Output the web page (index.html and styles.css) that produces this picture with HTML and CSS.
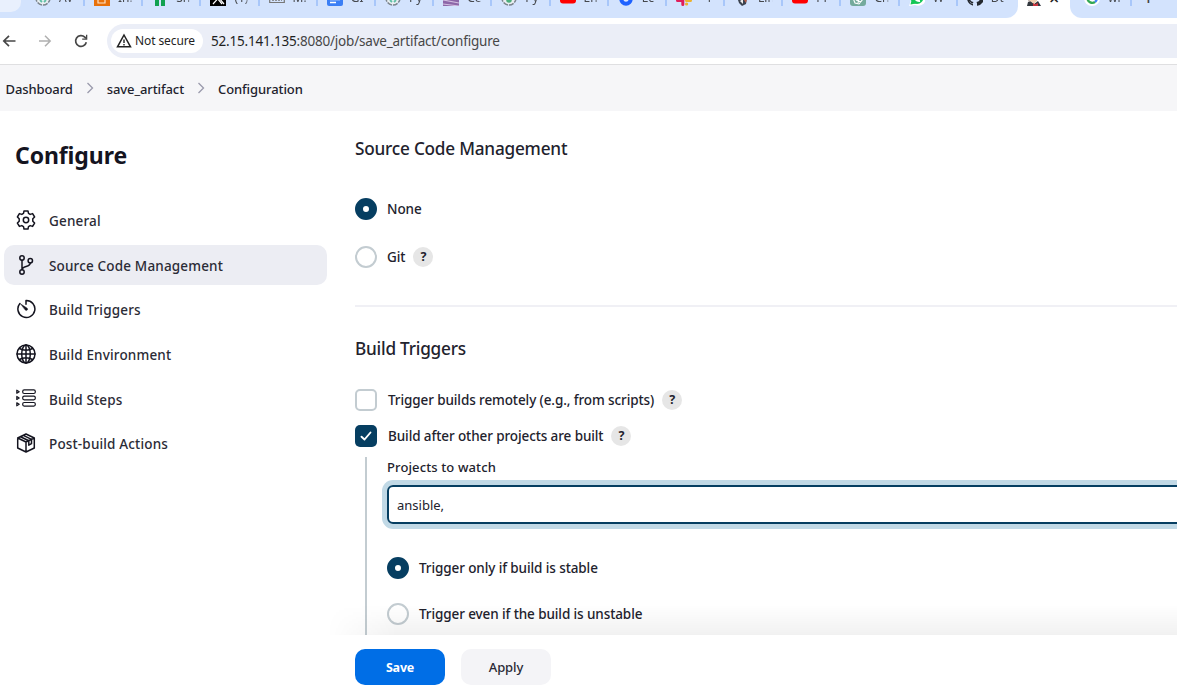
FILE: index.html
```html
<!DOCTYPE html>
<html lang="en">
<head>
<meta charset="utf-8">
<title>save_artifact Config [Jenkins]</title>
<link rel="stylesheet" href="styles.css">
</head>
<body>
<div class="tabstrip">
  <div class="tabs tabs-left">
    <div class="tab-search"></div>
    <div class="tab tab-first"><svg class="fav" viewBox="0 0 16 16"><circle cx="8" cy="8" r="7" fill="#e9eef2" stroke="#7b848c" stroke-width="1.5" stroke-dasharray="5 1"/><path d="M5 10l2 2M9 12l2-2" stroke="#5fbfa5" stroke-width="1.800"/></svg><span class="tt">AV</span></div>
    <div class="tab"><svg class="fav" viewBox="0 0 16 16"><path fill="#e8710a" d="M0 0h16v16H0z"/><path d="M4 7v6h7v-3M7 9h5" fill="none" stroke="#fde3c8" stroke-width="1.2"/></svg><span class="tt">In:</span></div>
    <div class="tab"><svg class="fav" viewBox="0 0 16 16"><path fill="#12a150" d="M3 2h4v14H3zM9 2h4v14H9z"/></svg><span class="tt">Sh</span></div>
    <div class="tab"><svg class="fav" viewBox="0 0 16 16"><path fill="#000" d="M0 0h16v16H0z"/><path d="M3 3l9 11M13 3L3 14M5 3l9 11" stroke="#fff" stroke-width="1.2"/></svg><span class="tt">(1)</span></div>
    <div class="tab"><svg class="fav" viewBox="0 0 16 16"><path d="M.7 3v9.5h14.600V3" fill="none" stroke="#777" stroke-width="1.2"/><path d="M3 10h10" stroke="#777" stroke-width="1.5" stroke-dasharray="2 1"/></svg><span class="tt">M:</span></div>
    <div class="tab"><svg class="fav" viewBox="0 0 16 16"><rect width="16" height="16" rx="2" fill="#3b7ff5"/><path d="M3 9.500h10M3 12.500h6" stroke="#fff" stroke-width="1.500"/></svg><span class="tt">GI</span></div>
    <div class="tab"><svg class="fav" viewBox="0 0 16 16"><circle cx="8" cy="8" r="7" fill="#e9eef2" stroke="#7b848c" stroke-width="1.500" stroke-dasharray="5 1"/><path d="M5 10l2 2M9 12l2-2" stroke="#5fbfa5" stroke-width="1.800"/></svg><span class="tt">Py</span></div>
    <div class="tab"><svg class="fav" viewBox="0 0 16 16"><path fill="#8d67a8" d="M0 0h16v16H0z"/><path d="M0 10l16 3M0 14l16 2" stroke="#d3bfe0" stroke-width="1.200"/></svg><span class="tt">Ce</span></div>
    <div class="tab"><svg class="fav" viewBox="0 0 16 16"><circle cx="8" cy="8" r="7" fill="#e9eef2" stroke="#7b848c" stroke-width="1.500" stroke-dasharray="5 1"/><circle cx="8" cy="10" r="2.800" fill="#4cae7c"/></svg><span class="tt">Py</span></div>
    <div class="tab"><svg class="fav" viewBox="0 0 16 16"><rect y="2" width="16" height="11.500" rx="3" fill="#f00"/></svg><span class="tt">En</span></div>
    <div class="tab"><svg class="fav" viewBox="0 0 16 16"><circle cx="8" cy="9" r="4.700" fill="#dbe7ff" stroke="#1f62ff" stroke-width="4"/></svg><span class="tt">Ec</span></div>
    <div class="tab"><svg class="fav" viewBox="0 0 16 16"><path d="M1.500 10.500h4M6.800 9v5.500" stroke="#e01e5a" stroke-width="3" stroke-linecap="round"/><path d="M10.500 10.500h4M10.500 14h.2" stroke="#ecb22e" stroke-width="3" stroke-linecap="round"/></svg><span class="tt">&nbsp;&nbsp;T</span></div>
    <div class="tab"><svg class="fav" viewBox="0 0 16 16"><path d="M3 7l2 6 3 3 4-2 1-7z" fill="#3b4350"/><path d="M6 11l3-2v5z" fill="#eee"/><path d="M10 10l3-1-1 4z" fill="#b55a45"/></svg><span class="tt">Lin</span></div>
    <div class="tab"><svg class="fav" viewBox="0 0 16 16"><rect y="2" width="16" height="11.500" rx="3" fill="#f00"/></svg><span class="tt">PP</span></div>
    <div class="tab"><svg class="fav" viewBox="0 0 16 16"><rect width="16" height="16" rx="3" fill="#74aa9c"/><path d="M3 8l2 5 4 1 4-5M6 10l5 2M9 8l-1 5" fill="none" stroke="#fff" stroke-width="1.100"/></svg><span class="tt">Ch</span></div>
    <div class="tab"><svg class="fav" viewBox="0 0 16 16"><path d="M0 16l2-6a7.500 7.500 0 1 1 4 5z" fill="#fff"/><circle cx="8" cy="7.500" r="6.500" fill="#14c656"/><path d="M1.500 14.500l1.500-6 4 5z" fill="#14c656"/><path d="M6 8.500q2 3 5 2.500" fill="none" stroke="#fff" stroke-width="2"/></svg><span class="tt">W</span></div>
    <div class="tab tab-last"><svg class="fav" viewBox="0 0 16 16"><path fill="#24292f" d="M8 0a8 8 0 0 0-2.500 15.600c.4.100.5-.2.500-.4v-1.500c-2 .4-2.600-.9-2.800-1.400l-.9-.9c.8 0 1.200.7 1.500 1 .7 1.100 1.700.8 2.200.6.100-.5.300-.9.500-1.100-1.800-.2-3.600-.9-3.600-4 0-4 10.200-4 10.200 0 0 3.100-1.900 3.800-3.700 4 .3.300.6.700.6 1.500v2c0 .2.100.5.500.4A8 8 0 0 0 8 0z"/></svg><span class="tt">Dt</span></div>
  </div>
  <div class="tab-active"><svg class="fav" viewBox="0 0 16 16"><path d="M1 16l1-4 3-1 3 3 4-3 3 5z" fill="#33383f"/><path d="M4 3h7v8l-3 3-4-3z" fill="#efcfb0"/><path d="M7 13l2 1.200 3-1.200v3H7z" fill="#c9343c"/><path d="M4 8H2l1 4z" fill="#694b3c"/></svg><span class="tab-x">×</span></div>
  <div class="tabs tabs-right">
    <div class="tab tab-g"><svg class="fav" viewBox="0 0 16 16"><circle cx="8" cy="8" r="8" fill="#fff"/><path d="M3.500 8.500a4.800 4.800 0 0 0 7.500 3.500" fill="none" stroke="#34a853" stroke-width="2.400"/><path d="M11 12a4.800 4.800 0 0 0 1.800-4H8" fill="none" stroke="#4285f4" stroke-width="2.400"/></svg><span class="tt">wi</span></div>
    <span class="plus">+</span>
  </div>
</div>
<div class="toolbar">
  <svg class="nav" viewBox="0 0 16 16"><path d="M14.500 8H3M8 2.800L2.800 8 8 13.200" fill="none" stroke="#474747" stroke-width="1.700"/></svg>
  <svg class="nav" viewBox="0 0 16 16"><path d="M2 8h11.500M8 2.800L13.200 8 8 13.200" fill="none" stroke="#b0b0b0" stroke-width="1.500"/></svg>
  <svg class="nav" viewBox="0 0 16 16"><path d="M13.300 9.200a5.400 5.400 0 1 1-1.500-5.100l1.200 1.300" fill="none" stroke="#474747" stroke-width="1.700"/><path d="M14.300 1.800v5H9.200V5.500H13V1.800z" fill="#474747"/></svg>
  <div class="omnibox">
    <div class="chip"><svg class="warn" viewBox="0 0 16 16"><path d="M8 2L14.500 13.800h-13z" fill="none" stroke="#222" stroke-width="1.500"/><path d="M8 6.500v3.600M8 11v1.500" stroke="#222" stroke-width="1.400"/></svg><span class="chip-text">Not secure</span></div>
    <span class="url"><span class="host">52.15.141.135</span>:8080/job/save_artifact/configure</span>
  </div>
</div>
<nav class="crumbs">
  <span>Dashboard</span>
  <svg class="chev" viewBox="0 0 8 12"><path d="M1.500 1L6.500 6l-5 5"/></svg>
  <span>save_artifact</span>
  <svg class="chev" viewBox="0 0 8 12"><path d="M1.500 1L6.500 6l-5 5"/></svg>
  <span>Configuration</span>
</nav>
<div class="page">
  <aside class="side">
    <h1>Configure</h1>
    <div class="item"><svg class="ico" viewBox="0 0 20 20"><path d="M7.500 3.400L8 1h4l.5 2.400 1.700 1 2.400-.8 2 3.400L16.800 8.800v2.400l1.800 1.800-2 3.400-2.400-.8-1.700 1L12 19H8l-.5-2.400-1.700-1-2.400.8-2-3.400 1.800-1.800V8.800L1.400 7l2-3.400 2.400.8z"/><circle cx="10" cy="10" r="2.700"/></svg><span>General</span></div>
    <div class="item active"><svg class="ico" viewBox="0 0 20 20"><circle cx="6" cy="3" r="2.200"/><circle cx="6" cy="17" r="2.200"/><circle cx="14.300" cy="5.700" r="2.200"/><path d="M6 5.200v9.600M14.300 8c0 4.500-8.300 2.500-8.300 6.800"/></svg><span>Source Code Management</span></div>
    <div class="item"><svg class="ico" viewBox="0 0 20 20"><path d="M3.900 4.500A8.500 8.500 0 1 0 10 1.500v3.700"/><path class="solid" d="M4.800 5.100l6.400 4.100a1.300 1.300 0 0 1-1.900 1.900z"/></svg><span>Build Triggers</span></div>
    <div class="item"><svg class="ico" viewBox="0 0 20 20"><circle cx="10" cy="10" r="9"/><ellipse cx="10" cy="10" rx="4.300" ry="9"/><path d="M10 1v18M1 10h18M3.500 4.500c3.600 2.200 9.400 2.200 13 0M3.500 15.500c3.600-2.200 9.400-2.200 13 0"/></svg><span>Build Environment</span></div>
    <div class="item"><svg class="ico thin" viewBox="0 0 20 20"><rect x="6.700" y="1.900" width="12.600" height="3.600" rx="1.500"/><rect x="6.700" y="8.200" width="12.600" height="3.600" rx="1.500"/><rect x="6.700" y="14.500" width="12.600" height="3.600" rx="1.500"/><path d="M.8 2.200v3l2.400-1.500zM.8 8.500v3L3.200 10zM.8 14.800v3l2.400-1.500z"/></svg><span>Build Steps</span></div>
    <div class="item"><svg class="ico" viewBox="0 0 20 20"><path d="M10 1l8.300 4v10L10 19l-8.300-4V5zM1.700 5L10 9l8.300-4M10 9v10M4.500 3.700l8.300 4v4.500l2.700-1.500V6.400L7.300 2.400"/></svg><span>Post-build Actions</span></div>
  </aside>
  <main class="main">
    <h2 class="h-scm">Source Code Management</h2>
    <div class="row r-none"><span class="radio on"></span><span class="text">None</span></div>
    <div class="row r-git"><span class="radio"></span><span class="text">Git</span><span class="help">?</span></div>
    <hr>
    <h2 class="h-bt">Build Triggers</h2>
    <div class="row r-remote"><span class="box"></span><span class="text">Trigger builds remotely (e.g., from scripts)</span><span class="help">?</span></div>
    <div class="row r-after"><span class="box checked"><svg viewBox="0 0 22 22"><path d="M6.500 11.700l3 2.800 6-7" fill="none" stroke="#fff" stroke-width="1.900" stroke-linecap="round" stroke-linejoin="round"/></svg></span><span class="text">Build after other projects are built</span><span class="help">?</span></div>
    <div class="nested">
      <div class="label">Projects to watch</div>
      <div class="input"><span>ansible,</span></div>
      <div class="row r-stable"><span class="radio on"></span><span class="text">Trigger only if build is stable</span></div>
      <div class="row r-unstable"><span class="radio"></span><span class="text">Trigger even if the build is unstable</span></div>
    </div>
    <div class="bottom">
      <button class="btn save">Save</button>
      <button class="btn apply">Apply</button>
    </div>
  </main>
</div>
</body>
</html>
```
FILE: styles.css
```css
* { box-sizing: border-box; }
body {
  margin: 0; width: 1177px; height: 697px; overflow: hidden;
  display: flex; flex-direction: column;
  background: #fff; color: #22222d;
  font: 500 14px/20px "Noto Sans", "Open Sans", sans-serif;
}
svg { display: block; flex: none; }
span { white-space: nowrap; }

/* browser tabs, cut off by the top edge */
.tabstrip { height: 18px; flex: none; display: flex; align-items: flex-end; overflow: hidden; }
.tabs { height: 40px; flex: none; display: flex; align-items: center; background: #d3e3fd; }
.tabs-left { width: 1018px; border-bottom-right-radius: 12px; }
.tabs-right { width: 107px; border-bottom-left-radius: 12px; }
.tab-search { width: 21px; height: 28px; flex: none; border-radius: 0 0 10px 0; background: #e9f0fd; }
.tab {
  width: 58.2px; height: 16px; flex: none; padding-left: 9px;
  display: flex; align-items: center; gap: 8px; border-right: 2px solid #a8c7fa;
}
.tab-first { width: 64px; padding-left: 14px; }
.tab-last { border-right: 0; }
.tab-g { width: 62px; padding-left: 14px; }
.fav { width: 16px; height: 16px; }
.tt {
  width: 15px; overflow: hidden; font: 12px/18px "Noto Sans", sans-serif; color: #45484d;
  -webkit-mask-image: linear-gradient(to right, #000 11px, transparent 16px);
  mask-image: linear-gradient(to right, #000 11px, transparent 16px);
}
.tab-active { width: 52px; height: 40px; flex: none; padding-left: 8px; display: flex; align-items: center; gap: 7px; }
.tab-x { font-size: 18px; color: #222; }
.plus { padding-left: 11px; font-size: 19px; color: #444; }

.toolbar { height: 46px; flex: none; padding-left: 1px; display: flex; align-items: center; gap: 20px; }
.nav { width: 16px; height: 16px; }
.omnibox {
  height: 34px; flex: 1; margin-left: -2px; padding-left: 4px;
  display: flex; align-items: center; gap: 8px;
  border-radius: 17px 0 0 17px; background: #ebeef7;
}
.chip { width: 92px; height: 24px; padding-left: 5px; display: flex; align-items: center; gap: 3px; border-radius: 12px; background: #fff; }
.warn { width: 16px; height: 16px; }
.chip-text { font-size: 12px; font-weight: 400; color: #1f1f1f; letter-spacing: -.1px; }
.url { font-size: 13.5px; font-weight: 400; color: #474747; letter-spacing: -.2px; }
.host { color: #1f1f1f; }

.crumbs { height: 47px; flex: none; padding: 1px 0 0 5.5px; display: flex; align-items: center; border-top: 1px solid #dfdfe1; background: #f6f6f8; font-size: 13px; letter-spacing: -.1px; }
.chev { width: 8px; height: 12px; margin: 0 13px 2px 13px; fill: none; stroke: #9a9aac; stroke-width: 1.3; }

.page { flex: 1; display: flex; min-height: 0; }
.side { width: 327px; flex: none; padding: 26px 0 0 4px; display: flex; flex-direction: column; }
h1, h2 { margin: 0; white-space: nowrap; }
h1 { margin: 0 0 27px 11px; height: 36px; font-size: 23px; line-height: 36px; font-weight: 700; letter-spacing: -.1px; color: #14141f; }
.item { height: 40px; flex: none; margin-bottom: 4.6px; padding-left: 12px; display: flex; align-items: center; gap: 13px; border-radius: 10px; font-size: 13.5px; letter-spacing: .16px; color: #2b2b36; }
.item span { padding-top: 2.6px; }
.item.active { background: #ecedf3; }
.ico { width: 20px; height: 20px; fill: none; stroke: #14141f; stroke-width: 1.5; stroke-linejoin: round; stroke-linecap: round; }
.ico.thin { stroke-width: 1.2; }
.ico .solid { fill: #14141f; stroke-width: .5; }

.main { flex: 1; min-width: 0; padding-left: 28px; display: flex; flex-direction: column; }
h2 { height: 24px; flex: none; line-height: 26px; font-size: 17.2px; font-weight: 500; letter-spacing: -.22px; }
.h-scm { margin-top: 25px; }
.row { height: 22px; flex: none; display: flex; align-items: center; gap: 10px; font-size: 13.5px; letter-spacing: -.1px; }
.help { width: 20px; height: 20px; margin-left: -2px; flex: none; border-radius: 50%; background: #e6e6e6; text-align: center; font-size: 12.5px; line-height: 20px; font-weight: 700; }
.radio, .box { width: 22px; height: 22px; flex: none; border: 2px solid #c3ccd1; border-radius: 50%; background: #fff; }
.radio.on { border: 8px solid #063e61; }
.box { border-radius: 5px; margin-right: 1px; }
.box.checked { border: 0; background: #063e61; }
.r-none { margin-top: 38px; }
.r-git { margin-top: 26px; }
hr { width: 100%; height: 2px; flex: none; margin: 37px 0 0; border: 0; background: #f0f0f5; }
.h-bt { margin-top: 29px; }
.r-remote { margin-top: 29px; }
.r-after { margin-top: 14px; }
.nested { height: 178px; flex: none; margin: 10px 0 0 10px; padding-left: 20px; display: flex; flex-direction: column; border-left: 2px solid #c3ccd1; overflow: hidden; }
.label { height: 20px; flex: none; font-size: 13px; letter-spacing: .12px; }
.input {
  height: 39px; flex: none; margin: 8px -10px 0 0; padding-left: 8px;
  display: flex; align-items: center; border: 2px solid #063e61; border-radius: 6px;
  box-shadow: 0 0 0 5px #c1d9e6; font-size: 13px; font-weight: 400;
}
.r-stable { margin-top: 33px; }
.r-unstable { margin-top: 24px; }
.bottom { position: relative; flex: 1; display: flex; gap: 16px; padding-top: 14px; background: #fff; }
.bottom::before {
  content: ""; position: absolute; left: -28px; right: 0; top: -30px; height: 30px;
  background: linear-gradient(to top, rgba(0,0,0,.055), rgba(0,0,0,0));
  -webkit-mask-image: linear-gradient(to right, transparent, #000 70px);
  mask-image: linear-gradient(to right, transparent, #000 70px);
}
.btn { width: 90px; height: 36px; border: 0; padding: 0; border-radius: 10px; font: 500 13px/37px "Noto Sans", sans-serif; letter-spacing: -.1px; }
.save { background: #006ee6; color: #fff; font-weight: 700; font-size: 12.5px; letter-spacing: -.2px; }
.apply { background: #f4f4f7; color: #2a2a36; }
```
